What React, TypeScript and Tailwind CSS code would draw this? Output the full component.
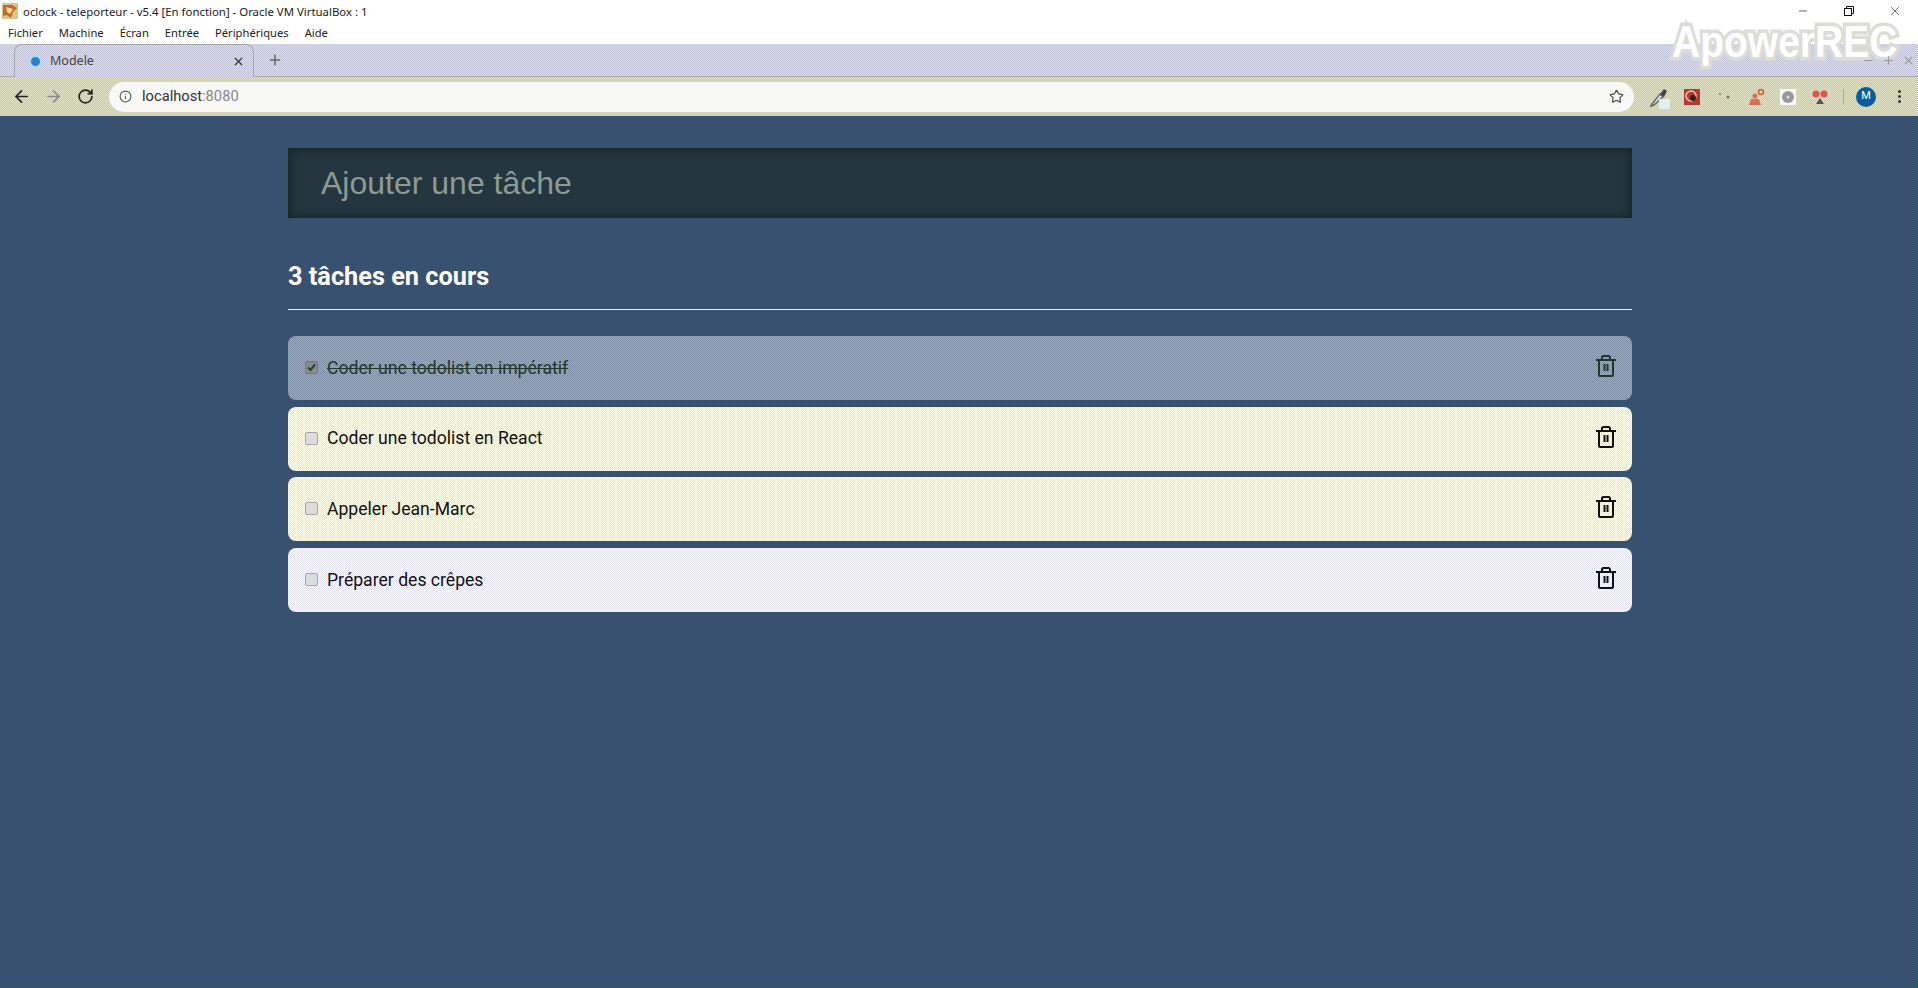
import { ArrowLeft, ArrowRight, Info, Minus, Plus, RotateCw, Star, X } from "lucide-react";

const tasks = [
    { label: "Coder une todolist en impératif", done: true },
    { label: "Coder une todolist en React", done: false },
    { label: "Appeler Jean-Marc", done: false },
    { label: "Préparer des crêpes", done: false },
];

const menus = ["Fichier", "Machine", "Écran", "Entrée", "Périphériques", "Aide"];

// the capture is a dithered gif, hence the 1px checker backgrounds
const chromeBg = "bg-[repeating-conic-gradient(#e0e0c4_0_25%,#c4c4d8_0_50%)] bg-[length:2px_2px]";

const TrashIcon = () => (
    <svg width="20" height="22" viewBox="0 0 20 22" fill="none" stroke="currentColor" strokeWidth="2">
        <path d="M0 5h20" />
        <path d="M6 4V2.500a1.500 1.500 0 0 1 1.500-1.500h5a1.500 1.500 0 0 1 1.500 1.500V4" />
        <path d="M3 5v15a1 1 0 0 0 1 1h12a1 1 0 0 0 1-1V5" />
        <path d="M8.500 9v7M11.500 9v7" />
    </svg>
);

const AppIcon = () => (
    <svg width="16" height="16" viewBox="0 0 16 16">
        <rect width="16" height="16" fill="#d9c48a" />
        <path d="M1 2h9l5 3-4 4-2 6-4-3-4 1z" fill="#c9662c" />
        <path d="M4 4l7 2-3 5-3-2z" fill="#f1dc9a" />
    </svg>
);

const RestoreIcon = () => (
    <svg width="10" height="10" viewBox="0 0 10 10" fill="none" stroke="#111" strokeWidth="1">
        <rect x="0.500" y="2.500" width="7" height="7" />
        <path d="M2.500 2.500V0.500h7v7H7.500" />
    </svg>
);

const ExtCell = ({ children }: { children: React.ReactNode }) => (
    <div className="w-[32px] flex justify-center shrink-0">{children}</div>
);

const Extensions = () => (
    <div className="flex items-center ml-[10px]">
        <ExtCell>
            <svg width="24" height="24" viewBox="0 0 24 24" fill="none">
                <path d="M4 19l8-10 3 3-9 8-3 1z" stroke="#666" strokeWidth="1.500" fill="#ddd" />
                <path d="M12 9l4-5 3 2-3 6z" fill="#444" />
                <rect x="11" y="14" width="11" height="10" fill="#dff0f0" />
            </svg>
        </ExtCell>
        <ExtCell>
            <svg width="16" height="16" viewBox="0 0 16 16">
                <rect width="16" height="16" fill="#b8362e" />
                <circle cx="7" cy="7" r="5" fill="none" stroke="#f3c9b8" strokeWidth="1.500" />
                <circle cx="9" cy="9" r="3" fill="#30201c" />
            </svg>
        </ExtCell>
        <ExtCell>
            <svg width="16" height="16" viewBox="0 0 16 16" fill="#777">
                <circle cx="4" cy="5" r="1" />
                <circle cx="12" cy="8" r="1.500" />
            </svg>
        </ExtCell>
        <ExtCell>
            <svg width="18" height="18" viewBox="0 0 18 18">
                <circle cx="14" cy="4" r="2.500" fill="none" stroke="#e2553f" strokeWidth="1.500" />
                <circle cx="8" cy="8" r="2.500" fill="#d9704f" />
                <path d="M2 17l2-6h8l2 6z" fill="#d9704f" />
            </svg>
        </ExtCell>
        <ExtCell>
            <svg width="16" height="16" viewBox="0 0 16 16">
                <rect width="16" height="16" fill="#f8f8f8" />
                <circle cx="8" cy="8" r="6" fill="#999" />
                <circle cx="8" cy="8" r="1.500" fill="#ddd" />
            </svg>
        </ExtCell>
        <ExtCell>
            <svg width="18" height="16" viewBox="0 0 18 16">
                <circle cx="5" cy="5" r="3.500" fill="#e0524d" />
                <circle cx="13" cy="5" r="3.500" fill="#e0524d" />
                <path d="M5 15l4-6 4 6z" fill="#555" />
            </svg>
        </ExtCell>
        <div className="w-px h-[16px] bg-[#a8a8a8] ml-[7px] shrink-0" />
        <div className="w-[20px] h-[20px] rounded-full bg-[#0b5c9e] text-white text-[11px] flex items-center justify-center ml-[12px] font-['Roboto',sans-serif] shrink-0">M</div>
        <div className="flex flex-col gap-[2px] ml-[22px] shrink-0">
            <span className="w-[3px] h-[3px] rounded-full bg-[#333]" />
            <span className="w-[3px] h-[3px] rounded-full bg-[#333]" />
            <span className="w-[3px] h-[3px] rounded-full bg-[#333]" />
        </div>
    </div>
);

const BrowserChrome = () => (
    <div className="relative font-['Noto_Sans',sans-serif] text-black">
        <div className="h-[22px] bg-white flex items-center">
            <div className="ml-[2px] mr-[5px]"><AppIcon /></div>
            <span className="text-[11.400px] text-[#222] pt-px">oclock - teleporteur - v5.4 [En fonction] - Oracle VM VirtualBox : 1</span>
            <div className="ml-auto flex items-center">
                <div className="w-[46px] flex justify-center"><Minus size={12} strokeWidth={1.200} /></div>
                <div className="w-[46px] flex justify-center"><RestoreIcon /></div>
                <div className="w-[46px] flex justify-center"><X size={14} strokeWidth={1} /></div>
            </div>
        </div>
        <div className="h-[22px] bg-white flex items-center pl-[8px] gap-[16px] text-[11.200px] text-[#222]">
            {menus.map((m) => (
                <span key={m}>{m}</span>
            ))}
        </div>
        <div className={`h-[33px] flex items-end pl-[14px] border-b border-[#a9a9a9] ${chromeBg}`}>
            <div className={`w-[240px] h-[33px] -mb-px rounded-t-[8px] border border-b-0 border-[#a9a9a9] flex items-center pl-[14px] pr-[8px] ${chromeBg}`}>
                <div className="w-[13px] h-[13px] rounded-full bg-[#2d7fd0] border-2 border-[#a8dcf0]" />
                <span className="ml-[8px] text-[12.500px] text-[#444]">Modele</span>
                <X size={13} strokeWidth={2.500} className="ml-auto text-[#444]" />
            </div>
            <Plus size={16} strokeWidth={2.200} className="ml-[13px] mb-[8px] text-[#666]" />
        </div>
        <div className={`h-[39px] flex items-center pl-[12px] ${chromeBg}`}>
            <ArrowLeft size={19} strokeWidth={2.200} className="text-[#222] shrink-0" />
            <ArrowRight size={19} strokeWidth={2} className="text-[#888] ml-[13px] shrink-0" />
            <RotateCw size={17} strokeWidth={2.400} className="text-[#222] ml-[14px] shrink-0" />
            <div className="ml-[15px] h-[30px] w-[1525px] shrink-0 rounded-full bg-[#f8f8f6] flex items-center pl-[10px] pr-[10px]">
                <Info size={13} className="text-[#555] shrink-0" />
                <span className="ml-[10px] text-[14.700px] font-['Roboto',sans-serif] text-[#333]">localhost<span className="text-[#888]">:8080</span></span>
                <Star size={15} strokeWidth={1.800} className="ml-auto text-[#444] shrink-0" />
            </div>
            <Extensions />
        </div>
        {/* recorder watermark */}
        <div className="absolute left-[1672px] top-[10px] origin-top scale-y-[1.150] text-[39px] leading-[56px] font-bold font-['Liberation_Sans',sans-serif] text-white [-webkit-text-stroke:6px_#dcdcd8] [paint-order:stroke_fill]">ApowerREC</div>
        <div className="absolute left-[1862px] top-[54px] flex gap-[7px] text-[#999]">
            <Minus size={13} strokeWidth={2} />
            <Plus size={13} strokeWidth={2} />
            <X size={13} strokeWidth={2} />
        </div>
    </div>
);

const Checkbox = ({ done }: { done: boolean }) => (
    <span className={`w-[13px] h-[13px] -mt-px rounded-[2px] border flex items-center justify-center shrink-0 ${done ? "border-[#6d7a74] bg-[#84918b]" : "border-[#a8a8a8] bg-[#dcdcdc]"}`}>
        {done && (
            <svg width="9" height="9" viewBox="0 0 9 9" fill="none" stroke="#2e3a34" strokeWidth="2">
                <path d="M1 4.500l2.500 2.500 4.500-5.500" />
            </svg>
        )}
    </span>
);

const TaskRow = ({ label, done }: { label: string; done: boolean }) => (
    <li className={`h-[64px] rounded-[8px] flex items-center pl-[17px] pr-[16px] bg-[length:2px_2px] ${done ? "bg-[repeating-conic-gradient(#a4b08c_0_25%,#7e8ea4_0_50%)] text-[#24362e]" : "bg-[repeating-conic-gradient(#ffffe8_0_25%,#e2e2f4_0_50%)] text-[#111]"}`}>
        <Checkbox done={done} />
        <span className={`ml-[9px] text-[17.600px] font-['Roboto',sans-serif] ${done ? "line-through" : ""}`}>{label}</span>
        <span className="ml-auto -mt-[4px]"><TrashIcon /></span>
    </li>
);

const App = () => {
    return (
        <div className="min-h-[988px] flex flex-col bg-[repeating-conic-gradient(#2a7030_0_25%,#324a6a_0_50%)] bg-[length:2px_2px]">
            <BrowserChrome />
            <main className="w-[1344px] ml-[288px] pt-[32px]">
                <div className="h-[70px] bg-[repeating-conic-gradient(#1a4a22_0_25%,#20303a_0_50%)] bg-[length:2px_2px] shadow-[inset_0_0_12px_#10231a] flex items-center pl-[33px]">
                    <span className="text-[32px] font-['Liberation_Sans',sans-serif] text-[#8a9c93]">Ajouter une tâche</span>
                </div>
                <h2 className="mt-[40px] h-[37px] text-[25.300px] leading-[37px] font-bold font-['Roboto',sans-serif] text-white">3 tâches en cours</h2>
                <div className="mt-[14px] h-px bg-[#f2f5f3]" />
                <ul className="mt-[26px] flex flex-col gap-[6.670px]">
                    {tasks.map((t) => (
                        <TaskRow key={t.label} label={t.label} done={t.done} />
                    ))}
                </ul>
            </main>
        </div>
    );
};

export default App;
